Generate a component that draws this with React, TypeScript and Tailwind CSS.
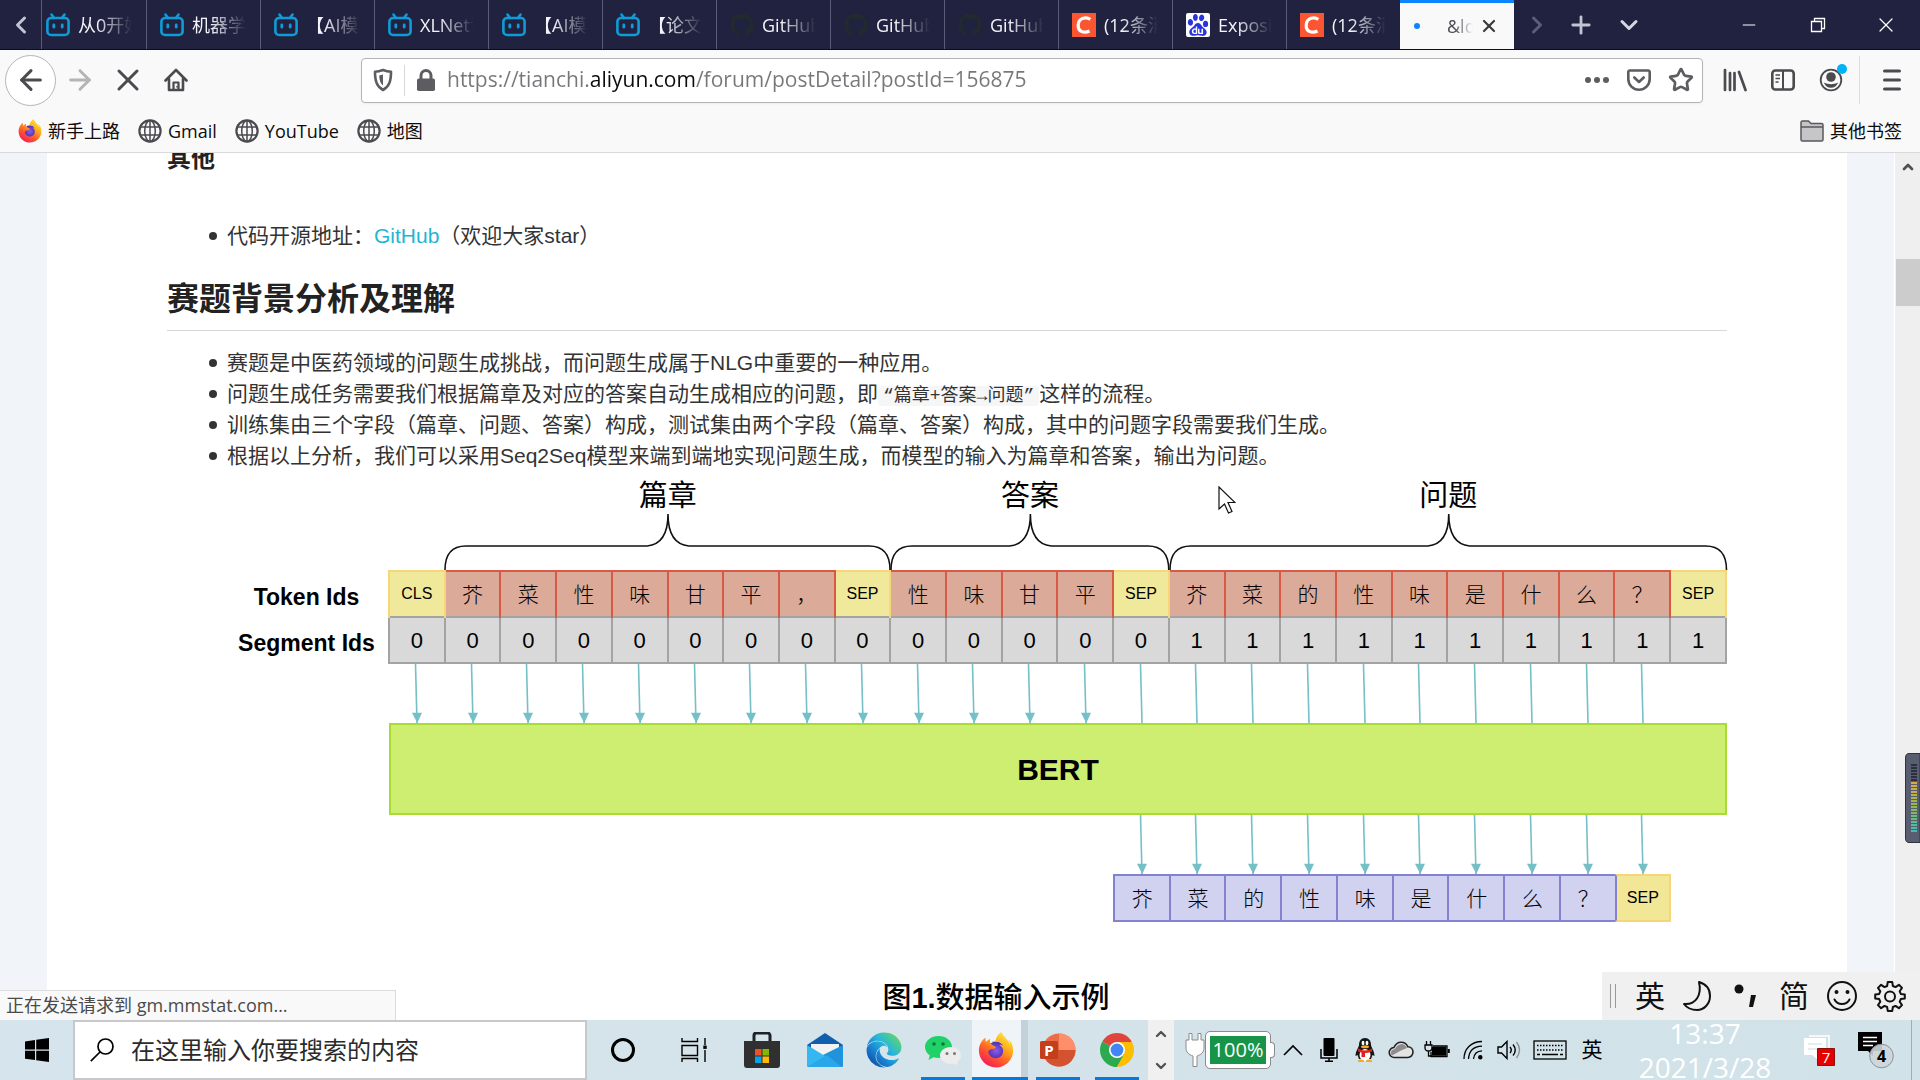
import type { ReactNode } from "react";
import {
  ArrowLeft,
  ArrowRight,
  ChevronDown,
  ChevronLeft,
  ChevronRight,
  ChevronUp,
  Minus,
  Plus,
  Star,
  X,
} from "lucide-react";
import { FaEdge, FaFirefoxBrowser, FaGithub } from "react-icons/fa";
import { SiBaidu } from "react-icons/si";

type Site = "bili" | "github" | "csdn" | "baidu";

const tabs: { site: Site; title: string }[] = [
  { site: "bili", title: "从0开始" },
  { site: "bili", title: "机器学习" },
  { site: "bili", title: "【AI模型" },
  { site: "bili", title: "XLNet详解" },
  { site: "bili", title: "【AI模型" },
  { site: "bili", title: "【论文" },
  { site: "github", title: "GitHub -" },
  { site: "github", title: "GitHub -" },
  { site: "github", title: "GitHub -" },
  { site: "csdn", title: "(12条消息" },
  { site: "baidu", title: "Exposing" },
  { site: "csdn", title: "(12条消息" },
];

const tokens = [
  "CLS", "芥", "菜", "性", "味", "甘", "平", "，", "SEP", "性", "味", "甘", "平", "SEP",
  "芥", "菜", "的", "性", "味", "是", "什", "么", "？", "SEP",
];

const output = ["芥", "菜", "的", "性", "味", "是", "什", "么", "？", "SEP"];

const braces = [
  { label: "篇章", cols: 8, className: "col-start-2 col-span-8" },
  { label: "答案", cols: 5, className: "col-span-5" },
  { label: "问题", cols: 10, className: "col-span-10" },
];

function BiliIcon() {
  return (
    <svg viewBox="0 0 24 24" className="size-6" fill="none" stroke="#0f9bd7" strokeWidth="2.6" strokeLinecap="round">
      <path d="M5.500 1.600 8 5M18.500 1.600 16 5" />
      <rect x="1.400" y="5" width="21.200" height="17" rx="3.600" />
      <path d="M7.800 12v2.200M16.200 12v2.200" strokeWidth="2.800" />
    </svg>
  );
}

function SiteIcon({ site }: { site: Site }) {
  if (site === "bili") return <BiliIcon />;
  if (site === "github") return <FaGithub className="size-6 text-[#22292f]" />;
  if (site === "csdn")
    return (
      <svg viewBox="0 0 24 24" className="size-6">
        <path d="M0 0h24v24H0z" fill="#fc5531" />
        <path d="M18.300 6.300C14.500 3.800 6.800 4.300 6.200 12c-.4 7.200 6.300 8.500 11.300 6" fill="none" stroke="#fff" strokeWidth="3.200" />
      </svg>
    );
  return (
    <span className="flex size-6 items-center justify-center rounded-xs bg-white">
      <SiBaidu className="size-[22px] text-[#2932e1]" />
    </span>
  );
}

function TabStrip() {
  return (
    <header className="flex h-[50px] shrink-0 items-stretch border-b border-[#0d0d1c] bg-[#20223f] text-lg text-[#f4f4fa]">
      <button aria-label="向左滚动" className="flex w-[41px] items-center justify-center text-[#c3c4d2]">
        <ChevronLeft className="size-7" strokeWidth={2.6} />
      </button>
      {tabs.map((tab, i) => (
        <button
          key={i}
          className="flex w-[114px] items-center gap-2 overflow-hidden border-l border-[#5b5d78] pl-[13px] text-left nth-2:w-[105px] nth-2:pl-1"
        >
          <span className="shrink-0">
            <SiteIcon site={tab.site} />
          </span>
          <span className="w-[54px] overflow-hidden whitespace-nowrap mask-r-from-35%">{tab.title}</span>
        </button>
      ))}
      <div className="flex w-[114px] items-center border-t-3 border-[#0a84ff] bg-[#f9f9fa] pl-3.5 text-[#4a4a52]">
        <span className="size-1.5 rounded-full bg-[#0a84ff]" />
        <span className="ml-[27px] w-[26px] overflow-hidden whitespace-nowrap mask-r-from-30%">&amp;ldquo</span>
        <button aria-label="关闭标签页" className="ml-1.5 text-[#38383d]">
          <X className="size-5" strokeWidth={2.6} />
        </button>
      </div>
      <button aria-label="向右滚动" className="flex w-[46px] items-center justify-center text-[#5c5d78]">
        <ChevronRight className="size-7" strokeWidth={2.6} />
      </button>
      <button aria-label="新建标签页" className="flex w-[42px] items-center justify-center text-[#c3c4d2]">
        <Plus className="size-7" strokeWidth={2.4} />
      </button>
      <button aria-label="列出标签页" className="flex w-[54px] items-center justify-center text-[#d5d6e0]">
        <ChevronDown className="size-7" strokeWidth={2.6} />
      </button>
      <div className="ml-auto flex text-white">
        <button aria-label="最小化" className="flex w-[70px] items-center justify-center">
          <Minus className="size-5" strokeWidth={1.2} />
        </button>
        <button aria-label="还原" className="flex w-[68px] items-center justify-center">
          <svg viewBox="0 0 16 16" className="size-4" fill="none" stroke="currentColor" strokeWidth="1.300">
            <path d="M1.500 4.500h10v10h-10zM4.500 4.500v-3h10v10h-3" />
          </svg>
        </button>
        <button aria-label="关闭" className="flex w-[68px] items-center justify-center">
          <X className="size-6" strokeWidth={1.3} />
        </button>
      </div>
    </header>
  );
}

function ToolButton({ label, wide, children }: { label: string; wide?: boolean; children: ReactNode }) {
  return (
    <button
      aria-label={label}
      className={wide ? "flex w-12 items-center justify-center" : "flex w-[42px] items-center justify-center"}
    >
      {children}
    </button>
  );
}

function Toolbar() {
  return (
    <nav className="flex h-[60px] shrink-0 items-center bg-[#f9f9fa] text-[#4a4a4f]">
      <button
        aria-label="后退"
        className="ml-[5px] flex size-[51px] items-center justify-center rounded-full border border-[#b6b6b8] bg-white"
      >
        <ArrowLeft className="size-8" strokeWidth={2.3} />
      </button>
      <ToolButton label="前进" wide>
        <ArrowRight className="size-8 text-[#b4b4b6]" strokeWidth={2.2} />
      </ToolButton>
      <ToolButton label="停止" wide>
        <X className="size-9" strokeWidth={2} />
      </ToolButton>
      <ToolButton label="主页" wide>
        <svg viewBox="0 0 24 24" className="size-6" fill="none" stroke="currentColor" strokeWidth="2.600" strokeLinejoin="round" strokeLinecap="round">
          <path d="M1.500 12.500 12 2l10.500 10.500M5 11v11h14V11" />
          <path d="M9.500 22v-7.500h5V22" strokeWidth="2.200" />
          <path d="M13 18.500v.5" strokeWidth="1.500" />
        </svg>
      </ToolButton>

      <div className="ml-[161px] flex h-[45px] min-w-0 flex-1 items-stretch rounded-sm border border-[#b4b4b6] bg-white text-[#5c5c61] shadow-xs">
        <ToolButton label="跟踪保护">
          <svg viewBox="0 0 24 24" className="size-6" fill="none" stroke="currentColor" strokeWidth="2.600">
            <path d="M12 2c3 1.200 5 1.700 8 1.800 0 9-1.500 14.500-8 18.200C5.500 18.300 4 12.800 4 3.800 7 3.700 9 3.200 12 2z" strokeLinejoin="round" />
            <path d="M12 6.500v11c-2.500-2-3.600-5-3.800-10z" fill="currentColor" stroke="none" />
          </svg>
        </ToolButton>
        <span className="my-1.5 w-px bg-[#d7d7db]" />
        <ToolButton label="连接安全">
          <svg viewBox="0 0 24 24" className="size-6">
            <rect x="3" y="10.500" width="18" height="12.500" rx="1.800" fill="currentColor" />
            <path d="M7 11V7.500a5 5 0 0 1 10 0V11" fill="none" stroke="currentColor" strokeWidth="3" />
          </svg>
        </ToolButton>
        {/* the host part of the address is darker than the rest */}
        <input
          aria-label="地址"
          readOnly
          value="https://tianchi.aliyun.com/forum/postDetail?postId=156875"
          className="min-w-0 flex-1 bg-[linear-gradient(90deg,#77777b_143px,#0c0c0d_143px,#0c0c0d_249px,#77777b_249px)] bg-clip-text text-[21px] text-transparent outline-none"
        />
        <ToolButton label="页面操作">
          <svg viewBox="0 0 24 24" className="size-6" fill="currentColor">
            <circle cx="3" cy="12" r="3" />
            <circle cx="12" cy="12" r="3" />
            <circle cx="21" cy="12" r="3" />
          </svg>
        </ToolButton>
        <ToolButton label="保存到 Pocket">
          <svg viewBox="0 0 24 24" className="size-6" fill="none" stroke="currentColor" strokeWidth="2.600" strokeLinecap="round" strokeLinejoin="round">
            <path d="M2.800 2.500h18.400a1.500 1.500 0 0 1 1.500 1.500v7a10.700 10.700 0 0 1-21.400 0V4a1.500 1.500 0 0 1 1.500-1.500z" />
            <path d="m7.300 9.500 4.700 4.500 4.700-4.500" />
          </svg>
        </ToolButton>
        <ToolButton label="添加书签">
          <Star className="size-[26px]" strokeWidth={2.5} />
        </ToolButton>
      </div>

      <div className="ml-2 flex">
        <ToolButton label="书库" wide>
          <svg viewBox="0 0 24 24" className="size-6" fill="none" stroke="currentColor" strokeWidth="2.700" strokeLinecap="round">
            <path d="M2 2v20M7 5v17M11.500 5v17M16 4l6.500 18" />
          </svg>
        </ToolButton>
        <ToolButton label="侧栏" wide>
          <svg viewBox="0 0 24 24" className="size-6" fill="none" stroke="currentColor" strokeWidth="2.600">
            <rect x="1.300" y="2.500" width="21.400" height="19" rx="3" />
            <path d="M12 2.500v19" strokeWidth="2" />
            <path d="M4.500 7h4.500M4.500 10.500h4.500M4.500 14h3" strokeWidth="1.500" />
          </svg>
        </ToolButton>
        <ToolButton label="账户" wide>
          <span className="relative">
            <svg viewBox="0 0 24 24" className="size-6">
              <circle cx="12" cy="12" r="10.300" fill="none" stroke="currentColor" strokeWidth="1.800" />
              <circle cx="12" cy="9" r="4.800" fill="currentColor" />
              <path d="M4.800 14.500c4.500 2.200 9.900 2.200 14.400 0-1.300 3.600-4 5.300-7.200 5.300s-5.900-1.700-7.200-5.300z" fill="currentColor" />
            </svg>
            <span className="absolute -top-1 -right-1 size-2.5 rounded-full bg-[#00b3f4]" />
          </span>
        </ToolButton>
      </div>
      <span className="ml-1 h-12 w-px bg-[#dedee0]" />
      <div className="mr-1 ml-2 flex">
        <ToolButton label="菜单" wide>
          <svg viewBox="0 0 24 24" className="size-6" stroke="currentColor" strokeWidth="3" strokeLinecap="round">
            <path d="M4.500 3h15M4.500 12h15M4.500 21h15" />
          </svg>
        </ToolButton>
      </div>
    </nav>
  );
}

function Globe() {
  return (
    <svg viewBox="0 0 24 24" className="size-6" fill="none" stroke="#4a4a4f" strokeWidth="1.500">
      <circle cx="12" cy="12" r="10.600" strokeWidth="2.200" />
      <ellipse cx="12" cy="12" rx="5.300" ry="10.500" />
      <path d="M12 1.500v21M2.500 8h19M2.500 16h19" />
    </svg>
  );
}

function FirefoxIcon({ className }: { className: string }) {
  return (
    <span className={className}>
      <svg viewBox="0 0 36 36" className="size-full">
        <defs>
          <linearGradient id="foxfire" x1="0.850" y1="0" x2="0.200" y2="1">
            <stop offset="0" stopColor="#fff14a" />
            <stop offset="0.350" stopColor="#ffae1a" />
            <stop offset="0.650" stopColor="#ff5a2c" />
            <stop offset="1" stopColor="#f2125f" />
          </linearGradient>
          <radialGradient id="foxglobe">
            <stop offset="0" stopColor="#8b5cf0" />
            <stop offset="1" stopColor="#4b2fae" />
          </radialGradient>
        </defs>
        <circle cx="18" cy="18.500" r="9" fill="url(#foxglobe)" />
        <FaFirefoxBrowser size={36} fill="url(#foxfire)" />
      </svg>
    </span>
  );
}

function Bookmarks() {
  return (
    <div className="flex h-[43px] shrink-0 items-center gap-[18px] border-b border-[#d9d9dc] bg-[#f9f9fa] px-[18px] text-lg text-[#0c0c0d]">
      <a href="#start" className="flex items-center gap-1.5">
        <FirefoxIcon className="size-6" />
        新手上路
      </a>
      <a href="#gmail" className="flex items-center gap-1.5"><Globe />Gmail</a>
      <a href="#youtube" className="flex items-center gap-1.5"><Globe />YouTube</a>
      <a href="#maps" className="flex items-center gap-1.5"><Globe />地图</a>
      <button className="ml-auto flex items-center gap-1.5">
        <svg viewBox="0 0 24 24" className="size-6" fill="#c6c6c9" stroke="#58585c" strokeWidth="1.500" strokeLinejoin="round">
          <path d="M1 3.500A1.500 1.500 0 0 1 2.500 2h6L11 4.500h10.500A1.500 1.500 0 0 1 23 6v14.500a1.500 1.500 0 0 1-1.500 1.500h-19A1.500 1.500 0 0 1 1 20.500z" />
          <path d="M1 8h22" />
        </svg>
        其他书签
      </button>
    </div>
  );
}

// curly brace whose tip sits in the middle of the spanned columns
function Brace({ cols }: { cols: number }) {
  const w = cols * 56;
  const m = w / 2;
  const d = `M0 56Q0 32 21 32H${m - 21}Q${m} 30 ${m} 0Q${m} 30 ${m + 21} 32H${w - 22}Q${w - 1} 32 ${w - 1} 56`;
  return (
    <svg viewBox={`0 0 ${w} 56`} preserveAspectRatio="none" className="h-14 w-full overflow-visible" fill="none" stroke="#111" strokeWidth="1.600">
      <path d={d} />
    </svg>
  );
}

function Arrow({ head = true }: { head?: boolean }) {
  return (
    <svg viewBox="0 0 12 60" preserveAspectRatio="none" className="mx-auto h-[59px] w-3">
      <path d="M4.500 0 6 60" stroke="#74c0c6" strokeWidth="1.600" />
      {head && <path d="M1 49.500h10L6.300 60z" fill="#74c0c6" />}
    </svg>
  );
}

function Diagram() {
  return (
    <figure className="mt-[7px] text-black">
      <div className="ml-[222px] grid grid-cols-24">
        {braces.map((b) => (
          <div key={b.label} className={b.className}>
            <p className="text-center text-[29px] leading-9">{b.label}</p>
            <Brace cols={b.cols} />
          </div>
        ))}
      </div>
      <div className="ml-[58px]">
        <table className="w-full table-fixed border-collapse text-center">
          <tbody>
            <tr className="h-[46px]">
              <th className="w-[164px] pt-1.5 text-[23px] font-bold">Token Ids</th>
              {tokens.map((t, i) =>
                t.length > 1 ? (
                  <td key={i} className="border-2 border-b-0 border-[#f7d67a] bg-[#f0e99b] text-base">{t}</td>
                ) : (
                  <td key={i} className="border-2 border-b-0 border-[#d65a45] bg-[#dbaa98] text-[21px] font-light">{t}</td>
                )
              )}
            </tr>
            <tr className="h-[46px]">
              <th className="pt-1.5 text-[23px] font-bold">Segment Ids</th>
              {tokens.map((_, i) => (
                <td key={i} className="border-2 border-[#a3a3a3] bg-[#d9d9d9] text-[22px]">{i < 14 ? 0 : 1}</td>
              ))}
            </tr>
          </tbody>
        </table>
      </div>
      <div className="ml-[222px]">
        <div className="grid grid-cols-24">
          {tokens.slice(0, 23).map((_, i) => (
            <Arrow key={i} head={i < 13} />
          ))}
        </div>
        <div className="flex h-[92px] items-center justify-center border-2 border-[#a9dc32] bg-[#cdee70] text-[30px] font-bold">
          BERT
        </div>
        <div className="grid grid-cols-24">
          {output.map((_, i) => (
            <div key={i} className="first:col-start-14">
              <Arrow />
            </div>
          ))}
        </div>
        <div className="grid grid-cols-24 text-center">
          {output.map((t, i) =>
            t.length > 1 ? (
              <span
                key={i}
                className="-ml-px flex h-12 items-center justify-center border-2 border-[#f7d67a] border-l-[#8580cf] bg-[#f2e796] text-base"
              >
                {t}
              </span>
            ) : (
              <span
                key={i}
                className="-ml-px flex h-12 items-center justify-center border-2 border-r-0 border-[#8580cf] bg-[#d1d1f0] text-[21px] font-light first:col-start-14"
              >
                {t}
              </span>
            )
          )}
        </div>
      </div>
      <figcaption className="mt-[58px] pl-[98px] text-center text-[29px] leading-9 font-medium">
        图<b>1.</b>数据输入示例
      </figcaption>
    </figure>
  );
}

function Item({ children }: { children: ReactNode }) {
  return (
    <li className="relative before:absolute before:top-3 before:-left-[18px] before:size-2 before:rounded-full before:bg-[#333]">
      {children}
    </li>
  );
}

function Article() {
  return (
    <article className="mx-[47px] flex-1 bg-white px-[120px] font-['Liberation_Sans','Noto_Sans_CJK_SC',sans-serif] text-[21px] leading-[31px] text-[#333]">
      <h3 className="-mt-3 text-2xl leading-9 font-bold text-[#222]">其他</h3>
      <ul className="mt-[43px] pl-[60px]">
        <Item>
          代码开源地址：<a href="#github" className="text-[#1fb6d1]">GitHub</a>（欢迎大家star）
        </Item>
      </ul>
      <h2 className="mt-7 border-b border-[#d8d8d8] pb-[11px] text-[32px] leading-10 font-bold text-[#222]">
        赛题背景分析及理解
      </h2>
      <ul className="mt-4 pl-[60px]">
        <Item>赛题是中医药领域的问题生成挑战，而问题生成属于NLG中重要的一种应用。</Item>
        <Item>
          问题生成任务需要我们根据篇章及对应的答案自动生成相应的问题，即
          <code className="rounded-sm bg-[#f6f6f6] px-[5px] font-['Liberation_Mono','Noto_Sans_CJK_SC',monospace] text-lg leading-6">
            “篇章+答案→问题”
          </code>
          这样的流程。
        </Item>
        <Item>训练集由三个字段（篇章、问题、答案）构成，测试集由两个字段（篇章、答案）构成，其中的问题字段需要我们生成。</Item>
        <Item>根据以上分析，我们可以采用Seq2Seq模型来端到端地实现问题生成，而模型的输入为篇章和答案，输出为问题。</Item>
      </ul>
      <Diagram />
    </article>
  );
}

function LevelWidget() {
  return (
    <svg viewBox="0 0 15 90" className="absolute top-[600px] right-0 h-[90px] w-[15px]">
      <defs>
        <linearGradient id="level" x1="0" y1="0" x2="0" y2="1">
          <stop offset="0" stopColor="#e0a84a" />
          <stop offset="0.500" stopColor="#8db956" />
          <stop offset="1" stopColor="#3fb9c0" />
        </linearGradient>
      </defs>
      <path d="M15 .5H4Q.5.500.5 5v80q0 4.500 3.500 4.500h11z" fill="#585d70" stroke="#2f3342" />
      <path d="M9 11v17" stroke="#2c303e" strokeWidth="6" strokeDasharray="2 1" />
      <path d="M6 29h6v51H6z" fill="url(#level)" />
      <path d="M9 31v49" stroke="#585d70" strokeWidth="6" strokeDasharray="1 2" />
    </svg>
  );
}

function ImeBar() {
  return (
    <div className="absolute right-0 bottom-0 flex h-12 w-[318px] items-center bg-[#f0f0f0] pl-2 text-[#111]">
      <span className="h-6 w-1.5 border-x border-[#999]" />
      <button className="ml-[19px] w-[30px] text-[30px] leading-none">英</button>
      <button aria-label="半角" className="ml-[17px]">
        <svg viewBox="0 0 30 32" className="h-8 w-[30px]" fill="none" stroke="currentColor" strokeWidth="2">
          <path d="M17 2c7 2 11 7 11 14 0 8-6 14-13 14-5 0-10-2-13-6 12 1 18-9 15-22z" strokeLinejoin="round" />
        </svg>
      </button>
      <button aria-label="标点" className="ml-[21px]">
        <svg viewBox="0 0 24 32" className="h-8 w-6" fill="currentColor">
          <circle cx="6" cy="9" r="4.500" />
          <path d="M18 15h5l-3 12h-4z" />
        </svg>
      </button>
      <button className="ml-[22px] w-[30px] text-[30px] leading-none">简</button>
      <button aria-label="表情" className="ml-[17px]">
        <svg viewBox="0 0 32 32" className="size-8" fill="none" stroke="currentColor" strokeWidth="2">
          <circle cx="16" cy="16" r="14" />
          <path d="M8.500 19.500c3 6 12 6 15 0" strokeLinecap="round" />
          <circle cx="10.500" cy="12" r="1" fill="currentColor" />
          <circle cx="21.500" cy="12" r="1" fill="currentColor" />
        </svg>
      </button>
      <button aria-label="设置" className="ml-4">
        <svg viewBox="0 0 32 32" className="size-8" fill="none" stroke="currentColor" strokeWidth="2" strokeLinejoin="round">
          <path d="M13.800 2h4.400l.7 4 2.600 1.100L24.900 4.800l3.100 3.100-2.300 3.400 1.100 2.600 4 .7v3.800l-4 .7-1.100 2.600 2.300 3.400-3.100 3.100-3.400-2.300-2.600 1.100-.7 4h-4.400l-.7-4-2.600-1.100-3.400 2.300L4 25.100l2.300-3.400-1.100-2.600-4-.7v-3.800l4-.7 1.100-2.600L4 7.900l3.100-3.100 3.400 2.300L13.100 6z" />
          <circle cx="16" cy="16.500" r="5" />
        </svg>
      </button>
    </div>
  );
}

function PageArea() {
  return (
    <main className="relative flex min-h-0 flex-1 overflow-hidden bg-[#f1f5fa]">
      <Article />
      <aside className="flex w-[26px] flex-col items-center border-l border-white bg-[#efefef] text-[#505050]">
        <button aria-label="向上滚动" className="flex h-[28px] items-center">
          <ChevronUp className="size-4" strokeWidth={4} />
        </button>
        <span className="mt-[78px] h-[47px] w-6 bg-[#cccccc]" />
      </aside>
      <p className="absolute bottom-0 left-0 h-[30px] w-[396px] border-t border-r border-[#dcdcdc] bg-[#f9f9fa] pl-1.5 text-lg leading-[29px] text-[#4a4a4a]">
        正在发送请求到 gm.mmstat.com…
      </p>
      <svg viewBox="0 0 18 28" className="absolute top-[333px] left-[1218px] h-7 w-[18px]" fill="#fff" stroke="#111" strokeWidth="1.200">
        <path d="M1 1v22l5.500-5 4 9 3.500-1.500-4-9H17z" />
      </svg>
      <LevelWidget />
      <ImeBar />
    </main>
  );
}

function StoreIcon() {
  return (
    <svg viewBox="0 0 36 36" className="size-9">
      <path d="M10 10V3.500A2.500 2.500 0 0 1 12.500 1h11A2.500 2.500 0 0 1 26 3.500V10" fill="none" stroke="#1f2327" strokeWidth="3" />
      <path d="M0 9h36v24a3 3 0 0 1-3 3H3a3 3 0 0 1-3-3z" fill="#303030" />
      <path d="M11 17h6.500v6.500H11z" fill="#f25022" />
      <path d="M18.500 17H25v6.500h-6.500z" fill="#7fba00" />
      <path d="M11 24.500h6.500V31H11z" fill="#00a4ef" />
      <path d="M18.500 24.500H25V31h-6.500z" fill="#ffb900" />
    </svg>
  );
}

function MailIcon() {
  return (
    <svg viewBox="0 0 36 36" className="size-9">
      <path d="M0 13 18 1l18 12v5H0z" fill="#0f5fae" />
      <path d="M4 12h28v10L18 28 4 20z" fill="#f2f2f2" />
      <path d="M0 13l36 22H1.500A1.500 1.500 0 0 1 0 33.500z" fill="#35b8f1" />
      <path d="M36 13v20.500a1.500 1.500 0 0 1-1.500 1.500H33L16 23z" fill="#1f93dc" />
      <path d="M0 35 20 23l14.500 12z" fill="#2aa6ea" />
    </svg>
  );
}

function EdgeIcon() {
  return (
    <svg viewBox="0 0 36 36" className="size-9">
      <defs>
        <linearGradient id="edge" x1="1" y1="0.200" x2="0.200" y2="1">
          <stop offset="0" stopColor="#5fd66b" />
          <stop offset="0.400" stopColor="#28b6dc" />
          <stop offset="0.700" stopColor="#1780d2" />
          <stop offset="1" stopColor="#0f4fa3" />
        </linearGradient>
      </defs>
      <FaEdge size={36} fill="url(#edge)" />
    </svg>
  );
}

function WechatIcon() {
  return (
    <svg viewBox="0 0 36 36" className="size-9">
      <path d="M13.500 4C6 4 0 8.800 0 15c0 3.500 1.900 6.400 4.800 8.400L3.500 28l5-2.700c1.500.5 3.200.7 5 .7 7.500 0 13.500-4.800 13.500-11S21 4 13.500 4z" fill="#1fd167" />
      <circle cx="9" cy="12" r="1.800" fill="#10753a" />
      <circle cx="18" cy="12" r="1.800" fill="#10753a" />
      <path d="M25.500 15C19.700 15 15 18.800 15 23.500S19.700 32 25.500 32c1.300 0 2.500-.2 3.600-.5l4 2-1-3.600c2.400-1.500 3.900-3.800 3.900-6.400 0-4.700-4.700-8.500-10.500-8.500z" fill="#ececec" />
      <circle cx="22" cy="21.500" r="1.500" fill="#777" />
      <circle cx="29.500" cy="21.500" r="1.500" fill="#777" />
    </svg>
  );
}

function PptIcon() {
  return (
    <svg viewBox="0 0 36 36" className="size-9">
      <circle cx="19" cy="18" r="16.500" fill="#ed6c47" />
      <path d="M19 1.500A16.500 16.500 0 0 1 35.500 18H19z" fill="#ff8f6b" />
      <path d="M2.500 18h33a16.500 16.500 0 0 1-33 0z" fill="#d35230" />
      <rect x="0" y="9" width="18" height="18" rx="1.500" fill="#c43e1c" />
      <text x="9" y="23.500" textAnchor="middle" fontSize="15" fontWeight="700" fill="#fff">P</text>
    </svg>
  );
}

function ChromeIcon() {
  return (
    <svg viewBox="0 0 36 36" className="size-9">
      <path d="M18 18 3.300 9.500A17 17 0 0 1 32.700 9.500z" fill="#e0443a" />
      <path d="M18 18 3.300 9.500A17 17 0 0 0 18 35l8-13z" fill="#2da94f" />
      <path d="M18 10h15a17 17 0 0 1-15 25l7-13z" fill="#fdbd00" />
      <circle cx="18" cy="18" r="8" fill="#fff" />
      <circle cx="18" cy="18" r="6.400" fill="#4285f4" />
    </svg>
  );
}

function AppButton({ label, running, children }: { label: string; running?: boolean; children: ReactNode }) {
  return (
    <button aria-label={label} className="flex w-[59px] flex-col items-center pt-3">
      {children}
      {running && <span className="mt-auto h-[3px] w-11 bg-[#0a78d4]" />}
    </button>
  );
}

function TrayButton({ label, children }: { label: string; children: ReactNode }) {
  return (
    <button aria-label={label} className="flex w-9 items-center justify-center">
      {children}
    </button>
  );
}

function Tray() {
  return (
    <div className="ml-auto flex shrink-0 text-black">
      <div className="flex w-[90px] items-center">
        <svg viewBox="0 0 20 36" className="h-9 w-5" fill="#fff" stroke="#8b8b8b">
          <path d="M4 1.500h3V8h6V1.500h3V8h3v8c0 4-2.500 6.500-7 8v10.500H8V24c-4.500-1.500-7-4-7-8V8h3z" />
        </svg>
        <span className="ml-px flex h-9 w-16 items-center justify-center rounded-sm border-4 border-white bg-[#179447] text-xl text-white outline outline-[#8b8b8b]">
          100%
        </span>
        <span className="h-4 w-[5px] rounded-r-sm border border-l-0 border-[#8b8b8b] bg-white" />
      </div>
      <TrayButton label="显示隐藏的图标">
        <svg viewBox="0 0 20 12" className="h-3 w-5" fill="none" stroke="currentColor" strokeWidth="1.600">
          <path d="m1 11 9-9 9 9" />
        </svg>
      </TrayButton>
      <TrayButton label="麦克风">
        <svg viewBox="0 0 18 24" className="h-6 w-[18px]" fill="none" stroke="currentColor" strokeWidth="1.500">
          <rect x="3.500" y="0" width="11" height="18" rx="1" fill="currentColor" stroke="none" />
          <path d="M1 11v9h16v-9M9 20v3M5 23.200h8" />
        </svg>
      </TrayButton>
      <TrayButton label="QQ">
        <svg viewBox="0 0 20 24" className="h-6 w-5">
          <path d="M10 0c4 0 6 3 6 7 0 2 3.500 6 3.500 11l-2-1-1.500 4H4l-1.500-4-2 1C.5 13 4 9 4 7c0-4 2-7 6-7z" fill="#141414" />
          <ellipse cx="10" cy="17" rx="5.500" ry="6" fill="#fff" />
          <ellipse cx="8" cy="5" rx="1.400" ry="2.200" fill="#fff" />
          <ellipse cx="12" cy="5" rx="1.400" ry="2.200" fill="#fff" />
          <ellipse cx="10" cy="8.800" rx="4" ry="1.500" fill="#f6a821" />
          <path d="M3 10.500q7 4 14 0v3q-4 1.500-7 1.500v4H6.500v-4.500Q4 14 3 13.500z" fill="#e02020" />
          <path d="M3 22.500q3-2 6 0v1.500H3zM11 22.500q3-2 6 0v1.500h-6z" fill="#f6a821" />
        </svg>
      </TrayButton>
      <TrayButton label="云同步">
        <svg viewBox="0 0 26 18" className="h-[18px] w-[26px]">
          <path d="M6.500 16.500a5 5 0 0 1-.6-10C7.500 3 10 1.200 13 1.200c3.200 0 5.800 1.700 6.800 4.600 3 0 5.200 2.300 5.200 5.300s-2.300 5.400-5.200 5.400z" fill="#e4e4e4" stroke="#222" strokeWidth="1.600" />
          <path d="M7 8c2-5 9-8 12-1l-6 2.500-9 5C1.500 12 3.500 8 7 8z" fill="#8d8d8d" />
        </svg>
      </TrayButton>
      <TrayButton label="电源">
        <svg viewBox="0 0 26 20" className="h-5 w-[26px]" fill="none" stroke="currentColor" strokeWidth="1.300">
          <path d="M2.500 1v4M6.500 1v4M1 5h7v3c0 2-1.500 3-3.500 3S1 10 1 8zM4.500 11v5H8" />
          <path d="M9 6h14v10.500H7V12" />
          <path d="M8.500 7.500h13V15h-13z" fill="currentColor" />
          <path d="M24.800 9v4" strokeWidth="2" />
        </svg>
      </TrayButton>
      <TrayButton label="网络">
        <svg viewBox="0 0 20 20" className="size-5" fill="none" stroke="currentColor" strokeWidth="1.300">
          <path d="M1 19C1 9 8 1.500 19 1.500M5.500 19C6 11 11 6.500 19 6.200M10.500 19c.5-5 3.500-8 8.500-8.200" />
          <circle cx="17.300" cy="17.300" r="1.600" fill="currentColor" />
        </svg>
      </TrayButton>
      <TrayButton label="音量">
        <svg viewBox="0 0 24 20" className="h-5 w-6" fill="none" stroke="currentColor" strokeWidth="1.400">
          <path d="M1 7h3.500L10 1.500v17L4.500 13H1z" />
          <path d="M13 7q2.500 3 0 6M16 4.500q4.500 5.500 0 11" />
          <path d="M19.500 2q6 8 0 16" stroke="#8a9296" />
        </svg>
      </TrayButton>
      <button aria-label="触摸键盘" className="flex w-[46px] items-center justify-center">
        <svg viewBox="0 0 34 20" className="h-5 w-[34px]" fill="none" stroke="currentColor" strokeWidth="1.300">
          <rect x="1" y="1" width="32" height="18" />
          <path d="M4 5.500h26M4 10h26" strokeDasharray="1.500 1.500" />
          <path d="M4 14.500h3M9 14.500h16M27 14.500h3" />
        </svg>
      </button>
      <button className="w-[38px] text-[21px]">英</button>
      <div className="w-[188px] text-center text-[28px] leading-[34px] text-white">
        <p className="-mt-1">13:37</p>
        <p>2021/3/28</p>
      </div>
      <button aria-label="消息" className="flex w-[42px] items-center justify-center">
        <svg viewBox="0 0 32 32" className="size-8">
          <path d="M5 2h20v17" fill="none" stroke="#fff" strokeWidth="1.500" />
          <path d="M0 4h22v17h-9v4l-5-4H0z" fill="#fff" />
          <path d="M4 10h14M4 15h10" stroke="#ccd9de" />
          <path d="M13.500 14.500h17v17h-17z" fill="#e50000" stroke="#8b1010" />
          <text x="22" y="28.500" textAnchor="middle" fontSize="15" fill="#fff">7</text>
        </svg>
      </button>
      <button aria-label="操作中心" className="flex w-[70px] items-center justify-center">
        <svg viewBox="0 0 36 38" className="h-[38px] w-9">
          <path d="M0 1h24v19h-9v5l-5-5H0z" fill="#000" />
          <path d="M5 6.500h14M5 10.500h14M5 14.500h10" stroke="#fff" strokeWidth="1.300" />
          <circle cx="23.500" cy="25" r="11.800" fill="#cdd6da" fillOpacity="0.900" stroke="#8b9296" />
          <text x="23.500" y="30.500" textAnchor="middle" fontSize="16" fontWeight="700" fill="#000">4</text>
        </svg>
      </button>
      <span className="mr-2 w-px bg-[#9fadb5]" />
    </div>
  );
}

function Taskbar() {
  return (
    <footer className="flex h-[60px] shrink-0 items-stretch bg-linear-to-r from-[#d5e4ed] via-[#d5e3ea] to-[#d1e2e9]">
      <button aria-label="开始" className="flex w-[73px] items-center justify-center">
        <svg viewBox="0 0 24 24" className="size-6" fill="#000">
          <path d="M0 3.400 10 2v9.500H0zM11.200 1.800 24 0v11.500H11.200zM0 12.700h10v9.400L0 20.700zM11.200 12.700H24V24l-12.800-1.800z" />
        </svg>
      </button>
      <label className="flex w-[514px] items-center border-2 border-[#c8c8ca] bg-white pl-[15px]">
        <svg viewBox="0 0 24 24" className="size-6" fill="none" stroke="#000" strokeWidth="1.700">
          <circle cx="15.500" cy="8.500" r="7.500" />
          <path d="M10 14 .8 23.200" />
        </svg>
        <input
          aria-label="搜索"
          placeholder="在这里输入你要搜索的内容"
          className="ml-[17px] min-w-0 flex-1 text-2xl outline-none placeholder:text-[#2b2b2b]"
        />
      </label>
      <button aria-label="Cortana" className="flex w-[71px] items-center justify-center">
        <span className="size-6 rounded-full border-3 border-black" />
      </button>
      <button aria-label="任务视图" className="flex w-[71px] items-center justify-center">
        <svg viewBox="0 0 26 24" className="h-6 w-[26px]" fill="none" stroke="#000" strokeWidth="1.400">
          <path d="M1 7.500h15.500v10H1zM1 0v3.500h15.500V0M1 24v-3.500h15.500V24M24 0v7M24 12v12" />
          <path d="M22.300 7.500h3.400v3.400h-3.400z" fill="#000" stroke="none" />
        </svg>
      </button>
      <button aria-label="Microsoft Store" className="flex w-[66px] items-center justify-center">
        <StoreIcon />
      </button>
      <AppButton label="邮件"><MailIcon /></AppButton>
      <AppButton label="Edge"><EdgeIcon /></AppButton>
      <AppButton label="微信" running><WechatIcon /></AppButton>
      <button aria-label="Firefox" className="flex w-14 flex-col border-b-3 border-[#0a78d4] bg-linear-to-r from-[#eef4f7] from-88% to-[#c3d2da] to-88% pt-3 pl-1.5">
        <FirefoxIcon className="size-9" />
      </button>
      <AppButton label="PowerPoint" running><PptIcon /></AppButton>
      <AppButton label="Chrome" running><ChromeIcon /></AppButton>
      <div className="ml-0.5 flex w-[26px] flex-col items-center justify-between bg-[#f0f0f0] py-1.5 text-[#505050]">
        <button aria-label="向上"><ChevronUp className="size-4" strokeWidth={3.5} /></button>
        <button aria-label="向下"><ChevronDown className="size-4" strokeWidth={3.5} /></button>
      </div>
      <Tray />
    </footer>
  );
}

export default function App() {
  return (
    <div className="flex h-screen flex-col overflow-hidden font-['Open_Sans','Noto_Sans_CJK_SC',sans-serif]">
      <TabStrip />
      <Toolbar />
      <Bookmarks />
      <PageArea />
      <Taskbar />
    </div>
  );
}
